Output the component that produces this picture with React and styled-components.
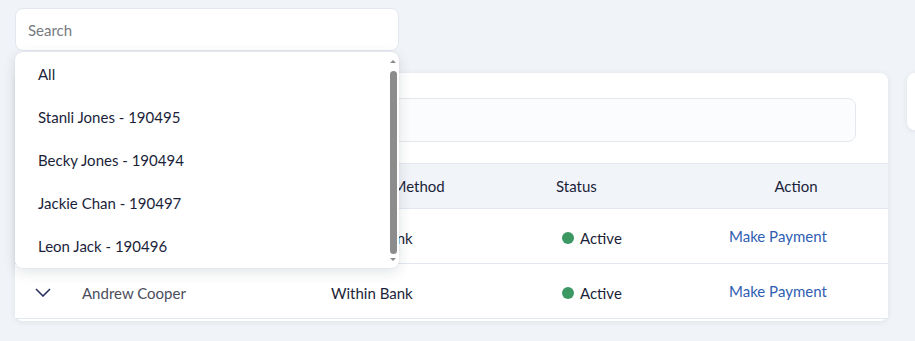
import React from "react";
import styled, { createGlobalStyle } from "styled-components";

const GlobalStyle = createGlobalStyle`
  * { box-sizing: border-box; }
  body {
    margin: 0;
    background: #f0f3f7;
    font-family: Lato, "Noto Sans", sans-serif;
    color: #1b1f3a;
    overflow: hidden;
  }
`;

const Page = styled.div`
  display: flex;
  gap: 19px;
  padding: 8px 0 0 15px;
  width: 915px;
  height: 341px;
  overflow: hidden;
`;

const Main = styled.div`
  display: flex;
  flex-direction: column;
  gap: 22px;
  width: 873px;
  flex-shrink: 0;
`;

const SearchWrap = styled.div`
  position: relative;
  width: 384px;
`;

const SearchInput = styled.input`
  width: 100%;
  height: 43px;
  border: 1px solid #e3e8ef;
  border-radius: 8px;
  background: #fff;
  padding: 0 12px;
  font: inherit;
  font-size: 15px;
  color: #1b1f3a;
  outline: none;

  &::placeholder {
    color: #777a80;
  }
`;

const Dropdown = styled.div`
  position: absolute;
  top: 44px;
  left: 0;
  right: 0;
  z-index: 5;
  display: flex;
  height: 216px;
  background: #fff;
  border-radius: 8px;
  box-shadow: 0 4px 14px rgba(20, 30, 50, 0.12), 0 0 2px rgba(20, 30, 50, 0.08);
  overflow: hidden;
`;

const OptionList = styled.ul`
  flex: 1;
  margin: 0;
  padding: 0;
  list-style: none;
  overflow: hidden;
`;

const Option = styled.li`
  height: 43px;
  display: flex;
  align-items: center;
  padding-left: 23px;
  font-size: 15px;
  color: #1b1f3a;
`;

const ScrollTrack = styled.div`
  width: 10px;
  display: flex;
  flex-direction: column;
  align-items: center;
  padding: 5px 0 4px;
  margin-right: 1px;
`;

const Arrow = styled.div`
  width: 0;
  height: 0;
  border-left: 3px solid transparent;
  border-right: 3px solid transparent;
  ${(p) =>
    p.$down
      ? "border-top: 3px solid #8a8a8a;"
      : "border-bottom: 3px solid #8a8a8a;"}
  margin: 3px 0;
`;

const Thumb = styled.div`
  width: 7px;
  height: 183px;
  margin: 5px 0 auto;
  background: #8c8c8c;
  border-radius: 4px;
`;

const Card = styled.div`
  background: #fff;
  border-radius: 8px;
  box-shadow: 0 1px 6px rgba(20, 30, 50, 0.08);
  padding-top: 25px;
  padding-bottom: 2px;
`;

const CardSearch = styled.div`
  height: 44px;
  margin: 0 32px 21px 32px;
  background: #fbfcfd;
  border: 1px solid #e3e8ef;
  border-radius: 8px;
`;

const Row = styled.div`
  display: grid;
  grid-template-columns: 67px 249px 225px 158px 1fr;
  align-items: center;
  height: ${(p) => (p.$head ? "46px" : "55px")};
  padding-top: ${(p) => (p.$head ? "0" : "3px")};
  background: ${(p) => (p.$head ? "#f1f4f8" : "#fff")};
  border-top: ${(p) => (p.$head ? "1px solid #e3e8ef" : "none")};
  border-bottom: 1px solid #e3e8ef;
  font-size: 15px;
`;

const HeadCell = styled.div`
  color: #1b1f3a;
  text-align: ${(p) => (p.$center ? "center" : "left")};
  padding-right: ${(p) => (p.$center ? "10px" : "0")};
`;

const Cell = styled.div`
  display: flex;
  align-items: center;
  padding-left: ${(p) => p.$pad || 0}px;
  color: ${(p) => p.$color || "#1b1f3a"};
`;

const Chevron = styled.svg`
  width: 16px;
  height: 9px;
  margin-left: 20px;
  margin-top: -1px;
`;

const Dot = styled.span`
  width: 12px;
  height: 12px;
  border-radius: 50%;
  background: #3b9862;
  margin-right: 6px;
`;

const PayLink = styled.a`
  color: #2f5eb3;
  text-decoration: none;
  margin-top: -4px;
  cursor: pointer;
`;

const SideCard = styled.div`
  width: 60px;
  height: 57px;
  margin-top: 65px;
  background: #fff;
  border-radius: 8px;
  box-shadow: 0 1px 6px rgba(20, 30, 50, 0.08);
  flex-shrink: 0;
`;

const options = [
  "All",
  "Stanli Jones - 190495",
  "Becky Jones - 190494",
  "Jackie Chan - 190497",
  "Leon Jack - 190496",
];

const rows = [
  { name: "Stanli Jones", method: "Within Bank" },
  { name: "Andrew Cooper", method: "Within Bank" },
];

export default function App() {
  return (
    <>
      <GlobalStyle />
      <Page>
        <Main>
          <SearchWrap>
            <SearchInput placeholder="Search" />
            <Dropdown>
              <OptionList>
                {options.map((o) => (
                  <Option key={o}>{o}</Option>
                ))}
              </OptionList>
              <ScrollTrack>
                <Arrow />
                <Thumb />
                <Arrow $down />
              </ScrollTrack>
            </Dropdown>
          </SearchWrap>
          <Card>
            <CardSearch />
            <Row $head>
              <HeadCell />
              <HeadCell>Beneficiary</HeadCell>
              <HeadCell>Payment Method</HeadCell>
              <HeadCell>Status</HeadCell>
              <HeadCell $center>Action</HeadCell>
            </Row>
            {rows.map((r) => (
              <Row key={r.name}>
                <Cell>
                  <Chevron viewBox="0 0 16 9" fill="none">
                    <path d="M1 1 L8 8 L15 1" stroke="#2a3160" strokeWidth="1.6" />
                  </Chevron>
                </Cell>
                <Cell $color="#4b4d5c">{r.name}</Cell>
                <Cell>{r.method}</Cell>
                <Cell $pad={6}>
                  <Dot />
                  Active
                </Cell>
                <Cell $pad={15}>
                  <PayLink>Make Payment</PayLink>
                </Cell>
              </Row>
            ))}
          </Card>
        </Main>
        <SideCard />
      </Page>
    </>
  );
}
